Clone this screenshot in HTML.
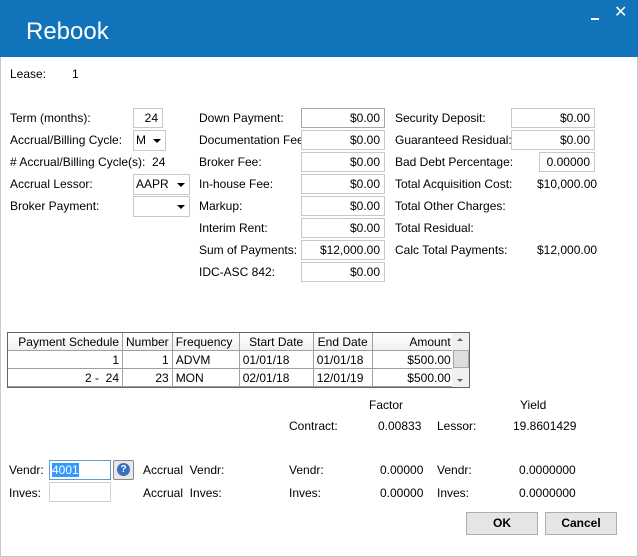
<!DOCTYPE html>
<html><head><style>
body{margin:0;width:638px;height:557px;overflow:hidden;background:#fff;font-family:"Liberation Sans",Arial,sans-serif;font-size:12px;color:#000;position:relative}
.t{position:absolute;white-space:nowrap;line-height:14px}
.b{position:absolute;border:1px solid #c8c8c8;background:#fff;box-sizing:border-box;height:20px;line-height:18px;text-align:right;padding-right:4px;white-space:nowrap}
.dd{position:absolute;border:1px solid #c8c8c8;background:#fff;box-sizing:border-box;height:21px;line-height:19px;padding-left:2px}
.dd:after{content:"";position:absolute;right:4px;top:8px;border-left:4px solid transparent;border-right:4px solid transparent;border-top:4px solid #000}
table{border-collapse:collapse;font-size:12px}
td{border:1px solid #a0a0a0;height:17px;padding:0 3px;white-space:nowrap}
</style></head><body>
<div style="position:absolute;left:0;top:0;width:638px;height:57px;background:#1174bb"></div>
<div class="t" style="left:26px;top:18px;font-size:24px;line-height:28px;color:#fff">Rebook</div>
<div style="position:absolute;left:591px;top:18px;width:8px;height:2px;background:#fff"></div>
<div class="t" style="left:614px;top:6px;color:#fff;font-size:16px">✕</div>
<div style="position:absolute;left:0;top:57px;width:1px;height:500px;background:#c8c8c8"></div>
<div style="position:absolute;right:0;top:57px;width:1px;height:500px;background:#c8c8c8"></div>
<div style="position:absolute;left:0;bottom:0;width:638px;height:1px;background:#c8c8c8"></div>

<div class="t" style="left:10px;top:67px">Lease:</div><div class="t" style="left:72px;top:67px">1</div>

<div class="t" style="left:10px;top:111px">Term (months):</div>
<div class="b" style="left:133px;top:108px;width:30px">24</div>
<div class="t" style="left:10px;top:133px">Accrual/Billing Cycle:</div>
<div class="dd" style="left:133px;top:130px;width:33px">M</div>
<div class="t" style="left:10px;top:155px"># Accrual/Billing Cycle(s):&nbsp; 24</div>
<div class="t" style="left:10px;top:177px">Accrual Lessor:</div>
<div class="dd" style="left:133px;top:174px;width:57px">AAPR</div>
<div class="t" style="left:10px;top:199px">Broker Payment:</div>
<div class="dd" style="left:133px;top:196px;width:57px"></div>

<div class="t" style="left:199px;top:111px">Down Payment:</div>
<div class="t" style="left:199px;top:133px">Documentation Fee:</div>
<div class="t" style="left:199px;top:155px">Broker Fee:</div>
<div class="t" style="left:199px;top:177px">In-house Fee:</div>
<div class="t" style="left:199px;top:199px">Markup:</div>
<div class="t" style="left:199px;top:221px">Interim Rent:</div>
<div class="t" style="left:199px;top:243px">Sum of Payments:</div>
<div class="t" style="left:199px;top:265px">IDC-ASC 842:</div>
<div class="b" style="left:301px;top:108px;width:84px;border-color:#9ab">$0.00</div>
<div class="b" style="left:301px;top:130px;width:84px">$0.00</div>
<div class="b" style="left:301px;top:152px;width:84px">$0.00</div>
<div class="b" style="left:301px;top:174px;width:84px">$0.00</div>
<div class="b" style="left:301px;top:196px;width:84px">$0.00</div>
<div class="b" style="left:301px;top:218px;width:84px">$0.00</div>
<div class="b" style="left:301px;top:240px;width:84px">$12,000.00</div>
<div class="b" style="left:301px;top:262px;width:84px">$0.00</div>

<div class="t" style="left:395px;top:111px">Security Deposit:</div>
<div class="t" style="left:395px;top:133px">Guaranteed Residual:</div>
<div class="t" style="left:395px;top:155px">Bad Debt Percentage:</div>
<div class="t" style="left:395px;top:177px">Total Acquisition Cost:</div>
<div class="t" style="left:395px;top:199px">Total Other Charges:</div>
<div class="t" style="left:395px;top:221px">Total Residual:</div>
<div class="t" style="left:395px;top:243px">Calc Total Payments:</div>
<div class="b" style="left:511px;top:108px;width:84px">$0.00</div>
<div class="b" style="left:511px;top:130px;width:84px">$0.00</div>
<div class="b" style="left:539px;top:152px;width:56px">0.00000</div>
<div class="t" style="left:537px;top:177px">$10,000.00</div>
<div class="t" style="left:537px;top:243px">$12,000.00</div>

<div style="position:absolute;left:7px;top:332px;width:463px;height:56px;border:1px solid #646464;box-sizing:border-box;overflow:hidden">
<table style="position:absolute;left:-1px;top:-1px">
<tr style="background:linear-gradient(#fff,#f0f0f0)"><td style="width:108px;text-align:right">Payment Schedule</td><td style="width:39px;text-align:right">Number</td><td style="width:60px">Frequency</td><td style="width:67px;text-align:center">Start Date</td><td style="width:52px;text-align:center">End Date</td><td style="width:75px;text-align:right">Amount</td></tr>
<tr><td style="text-align:right">1</td><td style="text-align:right">1</td><td>ADVM</td><td>01/01/18</td><td>01/01/18</td><td style="text-align:right">$500.00</td></tr>
<tr><td style="text-align:right">2 - &nbsp;24</td><td style="text-align:right">23</td><td>MON</td><td>02/01/18</td><td>12/01/19</td><td style="text-align:right">$500.00</td></tr>
</table>
<div style="position:absolute;right:0;top:0;width:17px;height:54px;background:#f0f0f0"><div style="position:absolute;left:1px;top:17px;width:14px;height:16px;background:#ddd;border:1px solid #aaa"></div><div style="position:absolute;left:5px;top:5px;border-left:3px solid transparent;border-right:3px solid transparent;border-bottom:3px solid #606060"></div><div style="position:absolute;left:5px;top:46px;border-left:3px solid transparent;border-right:3px solid transparent;border-top:3px solid #606060"></div></div>
</div>

<div class="t" style="left:369px;top:398px">Factor</div>
<div class="t" style="left:520px;top:398px">Yield</div>
<div class="t" style="left:289px;top:419px">Contract:</div>
<div class="t" style="left:378px;top:419px">0.00833</div>
<div class="t" style="left:437px;top:419px">Lessor:</div>
<div class="t" style="left:513px;top:419px">19.8601429</div>

<div class="t" style="left:9px;top:463px">Vendr:</div>
<div style="position:absolute;left:49px;top:460px;width:62px;height:20px;border:1px solid #5a9fd6;box-sizing:border-box"><span style="position:absolute;left:2px;top:2px;background:#3399ff;color:#fff;line-height:14px">4001</span></div>
<div style="position:absolute;left:113px;top:460px;width:21px;height:20px;border:1px solid #888;box-sizing:border-box;background:#e8e8e8;border-radius:2px"><div style="position:absolute;left:3px;top:2px;width:13px;height:13px;border-radius:50%;background:#3a6fc0;color:#fff;font-size:10px;font-weight:bold;text-align:center;line-height:13px">?</div></div>
<div class="t" style="left:9px;top:486px">Inves:</div>
<div style="position:absolute;left:49px;top:482px;width:62px;height:20px;border:1px solid #d0d0d0;box-sizing:border-box"></div>
<div class="t" style="left:143px;top:463px">Accrual&nbsp; Vendr:</div>
<div class="t" style="left:143px;top:486px">Accrual&nbsp; Inves:</div>
<div class="t" style="left:289px;top:463px">Vendr:</div>
<div class="t" style="left:289px;top:486px">Inves:</div>
<div class="t" style="left:380px;top:463px">0.00000</div>
<div class="t" style="left:380px;top:486px">0.00000</div>
<div class="t" style="left:437px;top:463px">Vendr:</div>
<div class="t" style="left:437px;top:486px">Inves:</div>
<div class="t" style="left:519px;top:463px">0.0000000</div>
<div class="t" style="left:519px;top:486px">0.0000000</div>

<div style="position:absolute;left:466px;top:512px;width:72px;height:23px;border:1px solid #adadad;box-sizing:border-box;background:#e5e5e5;text-align:center;line-height:21px;font-weight:bold">OK</div>
<div style="position:absolute;left:545px;top:512px;width:72px;height:23px;border:1px solid #adadad;box-sizing:border-box;background:#e5e5e5;text-align:center;line-height:21px;font-weight:bold">Cancel</div>
</body></html>
